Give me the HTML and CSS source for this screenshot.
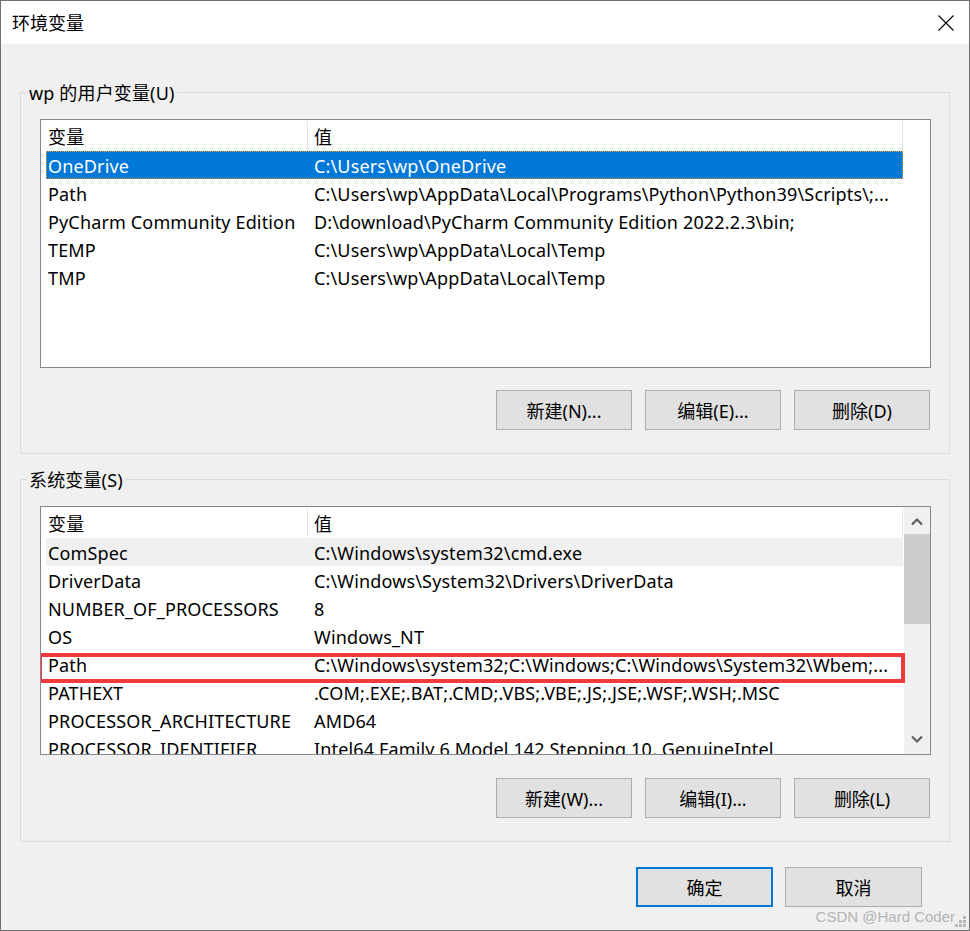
FILE: index.html
```html
<!DOCTYPE html>
<html lang="zh-CN">
<head>
<meta charset="utf-8">
<title>环境变量</title>
<link rel="stylesheet" href="styles.css">
</head>
<body>
<div class="window">
  <div class="titlebar">
    <span class="title">环境变量</span>
    <svg class="close" width="16" height="16" viewBox="0 0 16 16"><path d="M0.5 0.5L15.5 15.5M15.5 0.5L0.5 15.5" stroke="#000" stroke-width="1.1" fill="none"/></svg>
  </div>
  <div class="content">
    <div class="group g1">
      <span class="legend">wp 的用户变量(U)</span>
      <div class="list">
        <div class="rows">
          <div class="row head"><span class="c1">变量</span><span class="c2">值</span></div>
          <div class="row selected"><span class="c1">OneDrive</span><span class="c2">C:\Users\wp\OneDrive</span></div>
          <div class="row"><span class="c1">Path</span><span class="c2">C:\Users\wp\AppData\Local\Programs\Python\Python39\Scripts\;...</span></div>
          <div class="row"><span class="c1">PyCharm Community Edition</span><span class="c2">D:\download\PyCharm Community Edition 2022.2.3\bin;</span></div>
          <div class="row"><span class="c1">TEMP</span><span class="c2">C:\Users\wp\AppData\Local\Temp</span></div>
          <div class="row"><span class="c1">TMP</span><span class="c2">C:\Users\wp\AppData\Local\Temp</span></div>
        </div>
      </div>
      <div class="buttons">
        <button class="btn">新建(N)...</button>
        <button class="btn">编辑(E)...</button>
        <button class="btn">删除(D)</button>
      </div>
    </div>

    <div class="group g2">
      <span class="legend">系统变量(S)</span>
      <div class="list">
        <div class="rows">
          <div class="row head"><span class="c1">变量</span><span class="c2">值</span></div>
          <div class="row hover"><span class="c1">ComSpec</span><span class="c2">C:\Windows\system32\cmd.exe</span></div>
          <div class="row"><span class="c1">DriverData</span><span class="c2">C:\Windows\System32\Drivers\DriverData</span></div>
          <div class="row"><span class="c1">NUMBER_OF_PROCESSORS</span><span class="c2">8</span></div>
          <div class="row"><span class="c1">OS</span><span class="c2">Windows_NT</span></div>
          <div class="row marked"><span class="c1">Path</span><span class="c2">C:\Windows\system32;C:\Windows;C:\Windows\System32\Wbem;...</span></div>
          <div class="row"><span class="c1">PATHEXT</span><span class="c2">.COM;.EXE;.BAT;.CMD;.VBS;.VBE;.JS;.JSE;.WSF;.WSH;.MSC</span></div>
          <div class="row"><span class="c1">PROCESSOR_ARCHITECTURE</span><span class="c2">AMD64</span></div>
          <div class="row"><span class="c1">PROCESSOR_IDENTIFIER</span><span class="c2">Intel64 Family 6 Model 142 Stepping 10, GenuineIntel</span></div>
        </div>
        <div class="scrollbar">
          <svg class="arrow" width="12" height="9" viewBox="0 0 12 9"><path d="M1 7.5L6 2.5L11 7.5" stroke="#606060" stroke-width="2.2" fill="none"/></svg>
          <div class="track"><div class="thumb"></div></div>
          <svg class="arrow" width="12" height="9" viewBox="0 0 12 9"><path d="M1 1.5L6 6.5L11 1.5" stroke="#606060" stroke-width="2.2" fill="none"/></svg>
        </div>
      </div>
      <div class="buttons">
        <button class="btn">新建(W)...</button>
        <button class="btn">编辑(I)...</button>
        <button class="btn">删除(L)</button>
      </div>
    </div>

    <div class="footer">
      <button class="btn default">确定</button>
      <button class="btn">取消</button>
    </div>
  </div>
  <span class="watermark">CSDN @Hard Coder</span>
  <svg class="grip" width="12" height="12" viewBox="0 0 12 12" fill="#b8b8b8"><rect x="8" y="0" width="3" height="3"/><rect x="4" y="4" width="3" height="3"/><rect x="8" y="4" width="3" height="3"/><rect x="0" y="8" width="3" height="3"/><rect x="4" y="8" width="3" height="3"/><rect x="8" y="8" width="3" height="3"/></svg>
</div>
</body>
</html>
```

FILE: styles.css
```css
* { box-sizing: border-box; }
html, body { margin: 0; padding: 0; }
body {
  width: 970px;
  height: 931px;
  overflow: hidden;
  font-family: "Noto Sans", "Noto Sans CJK SC", sans-serif;
  font-size: 18px;
  color: #000;
  background: #f0f0f0;
}
.window {
  position: relative;
  width: 970px;
  height: 931px;
  border: 1px solid #707070;
  background: #f0f0f0;
}
.titlebar {
  height: 43px;
  background: #fff;
  display: flex;
  align-items: center;
  justify-content: space-between;
  padding: 0 15px 2px 11px;
}
.title {
  font-family: "Noto Sans CJK SC", sans-serif;
  font-size: 18px;
  line-height: 24px;
}
.close { display: block; margin-top: 2px; }
.content {
  padding: 48px 0 0 19px;
}
.group {
  position: relative;
  width: 930px;
  border: 1px solid #dcdcdc;
  padding: 26px 18px 23px 19px;
}
.g2 { margin-top: 25px; }
.legend {
  position: absolute;
  left: 6px;
  top: -13px;
  padding: 0 2px;
  background: #f0f0f0;
  line-height: 26px;
  letter-spacing: 0.15px;
}
.list {
  display: flex;
  height: 249px;
  border: 1px solid #828790;
  background: #fff;
  padding-left: 5px;
  overflow: hidden;
}
.rows { width: 857px; flex: none; letter-spacing: 0.15px; }
.row {
  display: flex;
  height: 28px;
  line-height: 30px;
  white-space: nowrap;
}
.row.head { height: 31px; }
.c1 {
  width: 262px;
  flex: none;
  padding-left: 2px;
  overflow: hidden;
}
.c2 {
  flex: 1;
  padding-left: 6px;
  overflow: hidden;
}
.head .c1 { border-right: 1px solid #e5e5e5; }
.head .c2 { border-right: 1px solid #e5e5e5; }
.head span { line-height: 32px; height: 29px; margin-top: 1px; }
.row.selected {
  background: #0078d7;
  color: #fff;
  outline: 1px dotted #f0a030;
  outline-offset: -1px;
}
.row.hover { background: #f0f0f0; }
.row.marked { position: relative; }
.row.marked::after {
  content: "";
  position: absolute;
  left: -8px;
  right: -2px;
  top: 3px;
  bottom: -5px;
  border: 4px solid #ef3b3b;
}
.scrollbar {
  width: 26px;
  flex: none;
  margin-left: 1px;
  background: #f0f0f0;
  display: flex;
  flex-direction: column;
  align-items: center;
}
.arrow { display: block; margin: 10px 0 8px; flex: none; }
.arrow:last-child { margin: 8px 0 10px; }
.track { flex: 1; width: 100%; }
.thumb { width: 100%; height: 90px; background: #cdcdcd; }
.buttons {
  display: flex;
  justify-content: flex-end;
  gap: 13px;
  margin-top: 22px;
  padding-right: 1px;
}
.g2 .buttons { margin-top: 23px; }
.btn {
  width: 136px;
  height: 40px;
  border: 1px solid #adadad;
  background: #e1e1e1;
  font-family: "Noto Sans", "Noto Sans CJK SC", sans-serif;
  font-size: 18px;
  color: #000;
  padding: 0;
  margin: 0;
}
.footer {
  display: flex;
  justify-content: flex-end;
  gap: 12px;
  margin-top: 25px;
  padding-right: 47px;
}
.footer .btn { width: 137px; }
.btn.default { border: 2px solid #0078d7; }
.watermark {
  position: absolute;
  right: 14px;
  bottom: 5px;
  font-family: "Liberation Sans", sans-serif;
  font-size: 15px;
  color: #b4b4b4;
  white-space: nowrap;
}
.grip { position: absolute; right: 2px; bottom: 2px; }
```
